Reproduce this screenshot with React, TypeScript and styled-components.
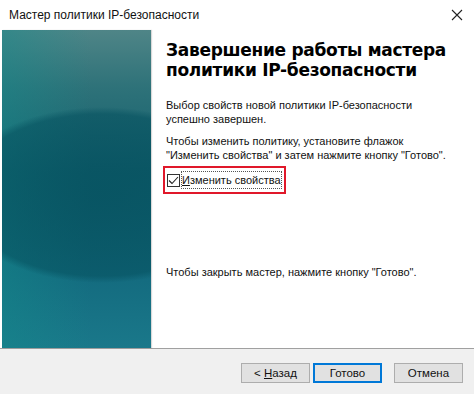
import * as React from 'react'
import styled, { createGlobalStyle } from 'styled-components'

const Global = createGlobalStyle`
  html, body { margin: 0; padding: 0; background: #fff; }
  body { font-family: "Liberation Sans", Arial, sans-serif; }
`

export default function App() {
  return (
    <>
      <Global />
      <Window>
        <TitleBar>
          <TitleText>Мастер политики IP-безопасности</TitleText>
          <CloseIcon width="12" height="12" viewBox="0 0 12 12">
            <path d="M1 1 L11 11 M11 1 L1 11" stroke="#222" strokeWidth="1.1" fill="none" />
          </CloseIcon>
        </TitleBar>
        <Body>
          <SidePanel />
          <Content>
            <Heading>Завершение работы мастера<br />политики IP-безопасности</Heading>
            <Para>Выбор свойств новой политики IP-безопасности<br />успешно завершен.</Para>
            <Para>Чтобы изменить политику, установите флажок<br />"Изменить свойства" и затем нажмите кнопку "Готово".</Para>
            <Highlight>
              <CheckBox>
                <svg width="11" height="9" viewBox="0 0 11 9">
                  <path d="M1 4.5 L4 7.5 L10 1" stroke="#222" strokeWidth="1.1" fill="none" />
                </svg>
              </CheckBox>
              <FocusLabel><u>И</u>зменить свойства</FocusLabel>
            </Highlight>
            <ClosingNote>Чтобы закрыть мастер, нажмите кнопку "Готово".</ClosingNote>
          </Content>
        </Body>
        <Footer>
          <Button>&lt; <u>Н</u>азад</Button>
          <Button $primary>Готово</Button>
          <Button $gap>Отмена</Button>
        </Footer>
      </Window>
    </>
  )
}

const Window = styled.div`
  width: 474px;
  height: 394px;
  display: flex;
  flex-direction: column;
  background: #fff;
  overflow: hidden;
`

const TitleBar = styled.div`
  flex: 0 0 30px;
  display: flex;
  align-items: center;
  justify-content: space-between;
  padding: 0 11px 0 9px;
`

const TitleText = styled.div`
  font-size: 12px;
  color: #111;
`

const CloseIcon = styled.svg`
  display: block;
`

const Body = styled.div`
  flex: 1 1 auto;
  display: flex;
  border-bottom: 1px solid #a0a0a0;
  padding-left: 2px;
`

const SidePanel = styled.div`
  flex: 0 0 149px;
  background:
    radial-gradient(ellipse 150px 88px at 100px 165px, rgba(6, 82, 96, 0.8) 0%, rgba(6, 82, 96, 0.6) 92%, rgba(6, 82, 96, 0) 100%),
    linear-gradient(to right, rgba(20, 140, 140, 0.45) 0%, rgba(20, 140, 140, 0) 60%),
    linear-gradient(to bottom, #4f8587 0%, #2e7279 18%, #125f6d 45%, #136a7e 75%, #1a788a 100%);
  box-shadow: 1px 0 1px rgba(0, 0, 0, 0.15);
`

const Content = styled.div`
  flex: 1 1 auto;
  display: flex;
  flex-direction: column;
  padding: 10px 10px 12px 15px;
`

const Heading = styled.div`
  font-family: "DejaVu Sans", Verdana, sans-serif;
  font-weight: bold;
  font-size: 17px;
  line-height: 20px;
  color: #000;
  letter-spacing: -0.3px;
  margin-bottom: 18px;
`

const Para = styled.div`
  font-size: 11px;
  line-height: 14px;
  color: #111;
  margin-bottom: 8px;
`

const Highlight = styled.div`
  align-self: flex-start;
  display: flex;
  align-items: center;
  gap: 2px;
  margin: -4px 0 0 -3px;
  padding: 3px 3px 3px 2px;
  border: 2px solid #e0182a;
  height: 28px;
  box-sizing: border-box;
`

const CheckBox = styled.div`
  width: 11px;
  height: 11px;
  border: 1px solid #333;
  display: flex;
  align-items: center;
  justify-content: center;
  background: #fff;
`

const FocusLabel = styled.span`
  font-size: 11px;
  color: #111;
  padding: 1px 0;
  outline: 1px dotted #555;
  line-height: 14px;
`

const ClosingNote = styled.div`
  font-size: 11px;
  line-height: 14px;
  color: #111;
  margin-top: 71px;
`

const Footer = styled.div`
  flex: 0 0 45px;
  background: #f0f0f0;
  display: flex;
  align-items: center;
  justify-content: flex-end;
  padding: 0 11px 0 0;
  gap: 3px;
`

const Button = styled.button<{ $primary?: boolean; $gap?: boolean }>`
  width: 69px;
  height: 20px;
  margin-left: ${p => (p.$gap ? '9px' : '0')};
  margin-top: 2px;
  font-family: "Liberation Sans", Arial, sans-serif;
  font-size: 11.5px;
  color: #111;
  background: #e1e1e1;
  border: 1px solid ${p => (p.$primary ? '#0078d7' : '#adadad')};
  box-shadow: ${p => (p.$primary ? 'inset 0 0 0 1px #0078d7' : 'none')};
  padding: 0;
`
